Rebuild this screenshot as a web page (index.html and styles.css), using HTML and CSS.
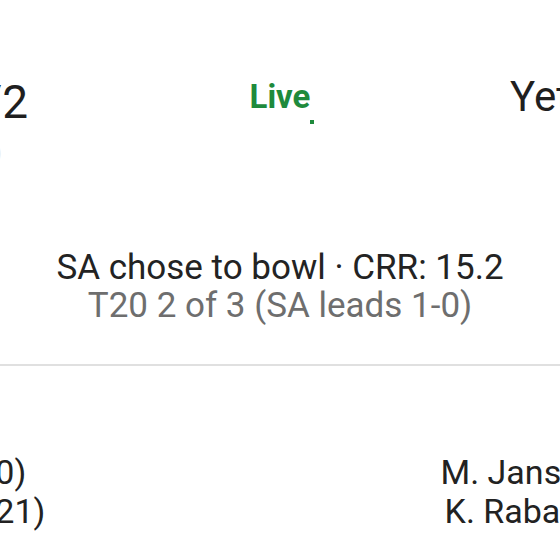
FILE: index.html
```html
<!DOCTYPE html>
<html lang="en">
<head>
<meta charset="utf-8">
<title>Live score</title>
<link rel="stylesheet" href="styles.css">
</head>
<body>
<div class="card">
  <div class="teams">
    <div class="team team-left">
      <div class="score">182/2</div>
      <div class="overs">(12 ov)</div>
    </div>
    <div class="status">
      <span class="live">Live<span class="dot"></span></span>
    </div>
    <div class="team team-right">
      <div class="score score-right">Yet to bat</div>
    </div>
  </div>
  <div class="summary">
    <div class="line-main">SA chose to bowl · CRR: 15.2</div>
    <div class="line-sub">T20 2 of 3 (SA leads 1-0)</div>
  </div>
  <div class="divider"></div>
  <div class="players">
    <div class="batters">
      <span class="name">T. Head</span><span class="stats">8 (10)</span>
      <span class="name">M. Short</span><span class="stats">34 (21)</span>
    </div>
    <div class="bowlers">
      <div>M. Jansen</div>
      <div>K. Rabada</div>
    </div>
  </div>
</div>
</body>
</html>
```
FILE: styles.css
```css
html, body {
  margin: 0;
  padding: 0;
  background: #ffffff;
}
body {
  font-family: Roboto, "Noto Sans", Arial, sans-serif;
  color: #222222;
  overflow: hidden;
  width: 560px;
  height: 560px;
}
.card {
  width: 560px;
}
.teams {
  display: grid;
  grid-template-columns: 200px 1fr 200px;
  align-items: start;
  margin-left: -172px;
  margin-right: -150px;
  padding-top: 76px;
  height: 64px;
}
.team-left {
  text-align: right;
  margin-top: 3px;
}
.score {
  font-size: 46px;
  line-height: 46px;
  color: #1f1f1f;
}
.score-right {
  font-size: 42px;
  line-height: 42px;
  white-space: nowrap;
}
.overs {
  font-size: 22px;
  line-height: 28px;
  color: #e4e4e4;
  margin-top: 14px;
  margin-right: 26px;
}
.status {
  text-align: center;
  padding-left: 22px;
  margin-top: 4px;
}
.live {
  position: relative;
  display: inline-block;
  font-size: 33px;
  line-height: 33px;
  font-weight: 700;
  color: #1e8a3c;
}
.dot {
  position: absolute;
  right: -4px;
  bottom: -11px;
  width: 4px;
  height: 4px;
  background: #1e8a3c;
}
.summary {
  margin-top: 109px;
  text-align: center;
  font-size: 35px;
  line-height: 38px;
  white-space: nowrap;
}
.line-main {
  color: #232323;
}
.line-sub {
  color: #6e6e6e;
}
.divider {
  margin-top: 39px;
  height: 2px;
  background: #e0e0e0;
}
.players {
  margin-top: 87px;
  display: flex;
  justify-content: space-between;
  font-size: 34px;
  line-height: 39px;
  color: #222222;
  margin-left: -210px;
  margin-right: -38px;
}
.batters {
  display: grid;
  grid-template-columns: 135px auto;
  column-gap: 12px;
  justify-items: start;
  white-space: nowrap;
}
.bowlers {
  text-align: right;
  white-space: nowrap;
}
```
